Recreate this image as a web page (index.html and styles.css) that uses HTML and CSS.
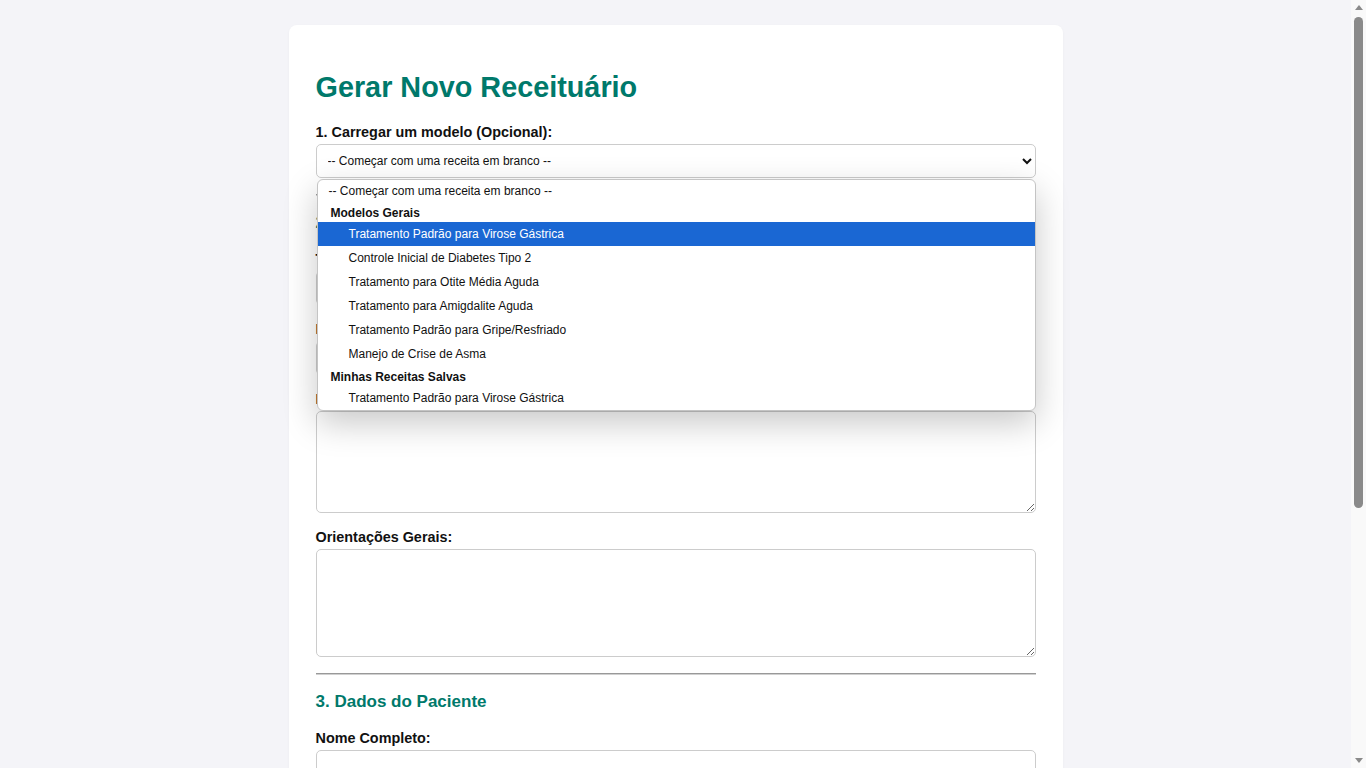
FILE: index.html
```html
<!DOCTYPE html>
<html lang="pt-BR">
<head>
<meta charset="utf-8">
<title>Gerar Novo Receituário</title>
<link rel="stylesheet" href="styles.css">
</head>
<body>
<main class="card">
  <h1 class="title">Gerar Novo Receituário</h1>

  <div class="field">
    <label class="label" for="modelo">1. Carregar um modelo (Opcional):</label>
    <div class="select-wrap">
      <select id="modelo" class="select">
        <option>-- Começar com uma receita em branco --</option>
      </select>
      <div class="popup">
        <div class="opt first">-- Começar com uma receita em branco --</div>
        <div class="group">Modelos Gerais</div>
        <div class="opt in active">Tratamento Padrão para Virose Gástrica</div>
        <div class="opt in">Controle Inicial de Diabetes Tipo 2</div>
        <div class="opt in">Tratamento para Otite Média Aguda</div>
        <div class="opt in">Tratamento para Amigdalite Aguda</div>
        <div class="opt in">Tratamento Padrão para Gripe/Resfriado</div>
        <div class="opt in">Manejo de Crise de Asma</div>
        <div class="group">Minhas Receitas Salvas</div>
        <div class="opt in">Tratamento Padrão para Virose Gástrica</div>
      </div>
    </div>
  </div>

  <hr class="sep">
  <h3 class="section">2. Dados da Receita</h3>

  <div class="field">
    <label class="label">Título da Receita:</label>
    <input class="input" type="text">
  </div>
  <div class="field">
    <label class="label">Diagnóstico:</label>
    <input class="input" type="text">
  </div>
  <div class="field">
    <label class="label">Medicamentos e Posologia:</label>
    <textarea class="textarea short"></textarea>
  </div>
  <div class="field">
    <label class="label">Orientações Gerais:</label>
    <textarea class="textarea"></textarea>
  </div>

  <hr class="sep">
  <h3 class="section">3. Dados do Paciente</h3>

  <div class="field">
    <label class="label">Nome Completo:</label>
    <input class="input" type="text">
  </div>
  <div class="field">
    <label class="label">Endereço:</label>
    <input class="input" type="text">
  </div>
  <div class="field">
    <label class="label">Data da Receita:</label>
    <input class="input" type="text">
  </div>

  <div class="actions">
    <button class="btn" type="button">Gerar Receituário</button>
  </div>
</main>

<div class="scrollbar" aria-hidden="true">
  <div class="sb-arrow up"></div>
  <div class="sb-track"><div class="sb-thumb"></div></div>
  <div class="sb-arrow down"></div>
</div>
</body>
</html>
```

FILE: styles.css
```css
html, body {
  margin: 0;
  padding: 0;
}
body {
  background: #f4f4f8;
  font-family: "Liberation Sans", Arial, sans-serif;
  font-size: 16px;
  color: #222;
  padding: 25px 15px 25px 0;
}
.card {
  width: 720px;
  margin: 0 auto;
  background: #fff;
  border-radius: 8px;
  padding: 27px;
  box-shadow: 0 1px 3px rgba(0,0,0,0.04);
}
.title {
  font-size: 28.8px;
  line-height: normal;
  margin: 19.3px 0;
  color: #00796b;
  font-weight: bold;
}
.field {
  margin-bottom: 16px;
}
.label {
  display: block;
  font-size: 14.4px;
  line-height: normal;
  font-weight: bold;
  color: #111;
  margin-bottom: 4px;
}
.select-wrap {
  position: relative;
}
.select {
  display: block;
  width: 100%;
  height: 34px;
  box-sizing: border-box;
  border: 1px solid #ccc;
  border-radius: 5px;
  background: #fff;
  font-family: "Liberation Sans", Arial, sans-serif;
  font-size: 12px;
  color: #111;
  padding: 0 7px;
}
.popup {
  position: absolute;
  top: calc(100% + 1px);
  left: 1px;
  right: 0;
  background: #fff;
  border: 1px solid #c4c4c4;
  border-radius: 6px;
  box-shadow: 0 12px 34px rgba(0,0,0,0.22);
  overflow: hidden;
  font-size: 12px;
  color: #111;
  z-index: 10;
}
.opt {
  height: 24px;
  line-height: 24px;
  padding-left: 11px;
  white-space: nowrap;
}
.opt.first {
  height: 22px;
  line-height: 22px;
}
.opt.in {
  padding-left: 31px;
}
.opt.active {
  background: #1a67d3;
  color: #fff;
}
.group {
  height: 20px;
  line-height: 22px;
  padding-left: 13px;
  font-weight: bold;
}
.sep {
  border: 0;
  border-top: 1px solid #999;
  border-bottom: 1px solid #d0d0d0;
  height: 0;
  margin: 16px 0 0;
}
.section {
  font-size: 17px;
  line-height: normal;
  color: #00796b;
  font-weight: bold;
  margin: 17px 0 18px;
}
.input {
  display: block;
  width: 100%;
  height: 34px;
  box-sizing: border-box;
  border: 1px solid #ccc;
  border-radius: 5px;
  font-family: "Liberation Sans", Arial, sans-serif;
  font-size: 13px;
  padding: 0 10px;
}
.textarea {
  display: block;
  width: 100%;
  height: 108px;
  box-sizing: border-box;
  border: 1px solid #ccc;
  border-radius: 5px;
  font-family: "Liberation Sans", Arial, sans-serif;
  font-size: 13px;
  padding: 8px 10px;
  margin: 0;
}
.textarea.short {
  height: 102px;
}
.actions {
  padding-top: 8px;
}
.btn {
  width: 100%;
  height: 44px;
  border: 0;
  border-radius: 5px;
  background: #00796b;
  color: #fff;
  font-family: "Liberation Sans", Arial, sans-serif;
  font-size: 16px;
  font-weight: bold;
}

/* window scrollbar */
.scrollbar {
  position: fixed;
  top: 0;
  right: 0;
  width: 15px;
  height: 100vh;
  background: #f9f9f9;
  display: flex;
  flex-direction: column;
  align-items: center;
  z-index: 20;
}
.sb-arrow {
  height: 15px;
  width: 15px;
  display: flex;
  align-items: center;
  justify-content: center;
}
.sb-arrow::before {
  content: "";
  width: 0;
  height: 0;
  border-left: 4px solid transparent;
  border-right: 4px solid transparent;
}
.sb-arrow.up::before {
  border-bottom: 5px solid #8a8a8a;
}
.sb-arrow.down::before {
  border-top: 5px solid #8a8a8a;
}
.sb-track {
  flex: 1;
  width: 15px;
  display: flex;
  justify-content: center;
  padding-top: 2px;
}
.sb-thumb {
  width: 9px;
  height: 491px;
  border-radius: 5px;
  background: #8a8a8a;
}
```
